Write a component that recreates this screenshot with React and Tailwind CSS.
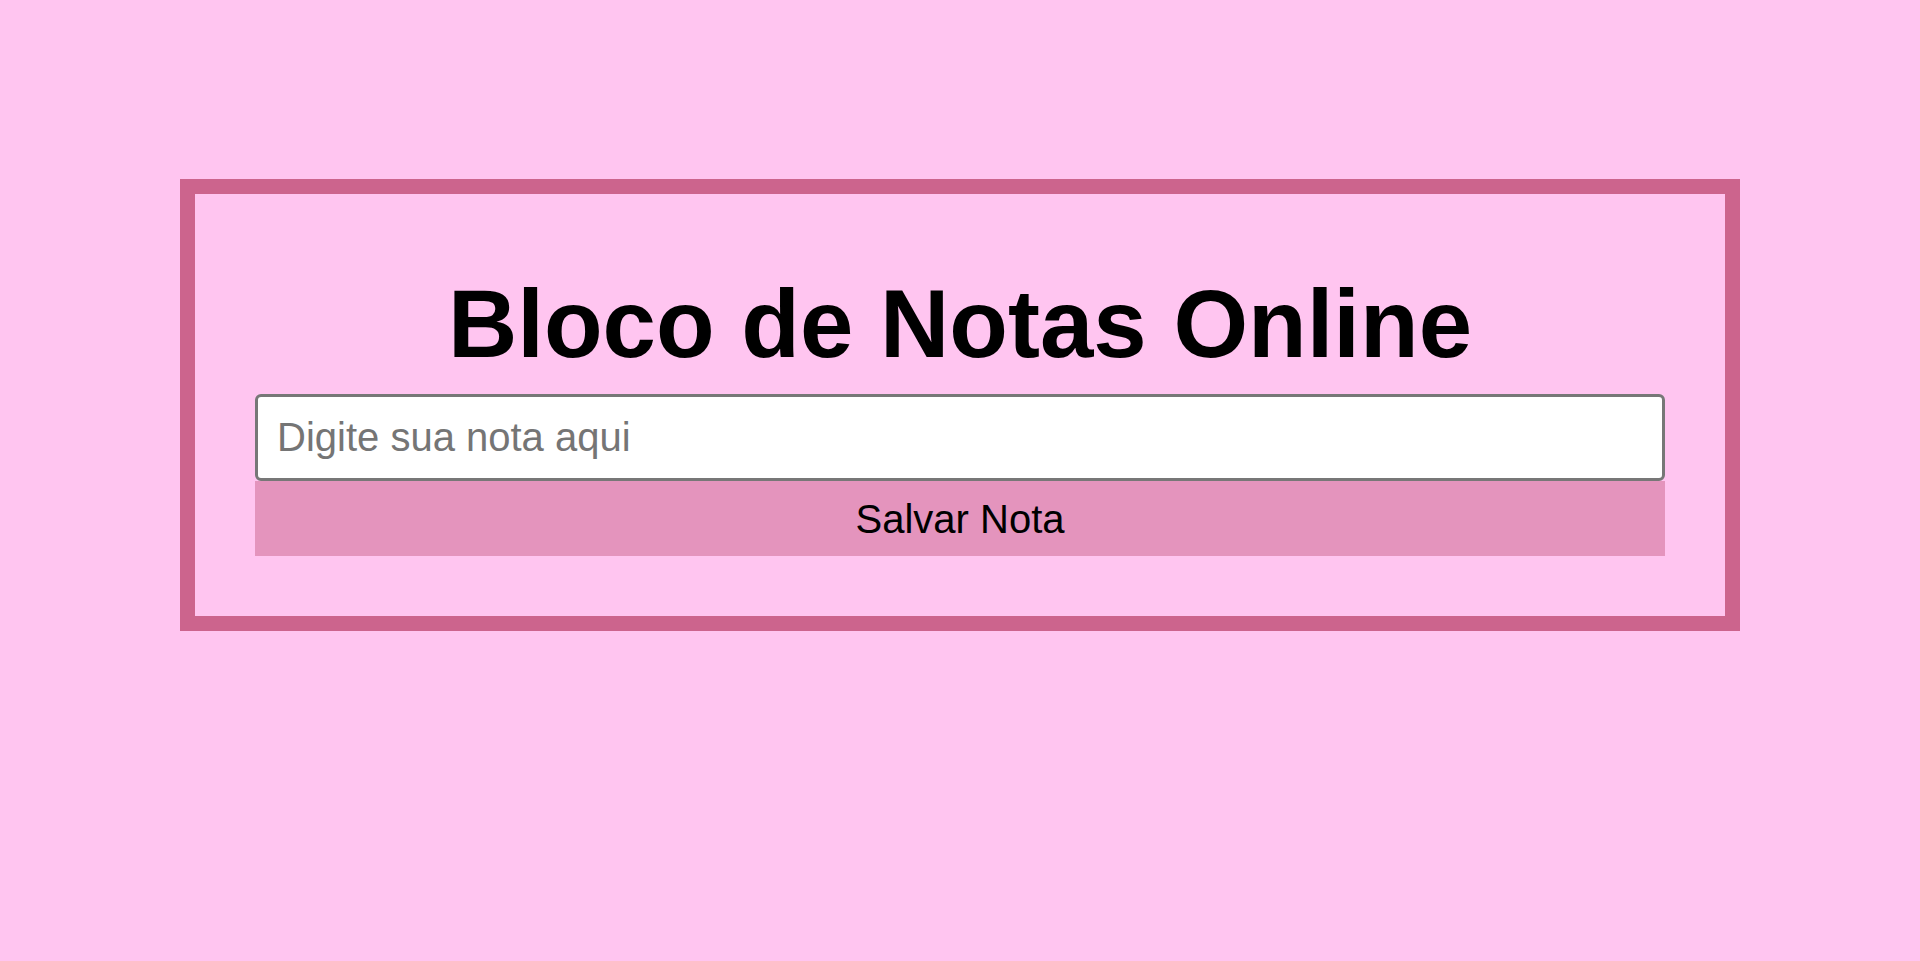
export default function App() {
  return (
    <div className="min-h-screen bg-[#ffc5f0] pt-[179px] font-['Liberation_Sans',Arial,sans-serif]">
      <div className="mx-auto w-[1560px] border-[15px] border-[#cc648d] p-[60px]">
        <h1 className="my-[15px] h-[110px] text-center text-[96px] font-bold leading-[110px] text-black">
          Bloco de Notas Online
        </h1>
        <input
          type="text"
          placeholder="Digite sua nota aqui"
          className="block h-[87px] w-full rounded-[6px] border-[3px] border-[#777777] bg-white px-[19px] text-[40px] text-black outline-none placeholder:text-[#757575]"
        />
        <button className="block h-[75px] w-full bg-[#e494bd] text-[40px] text-black">
          Salvar Nota
        </button>
      </div>
    </div>
  );
}
